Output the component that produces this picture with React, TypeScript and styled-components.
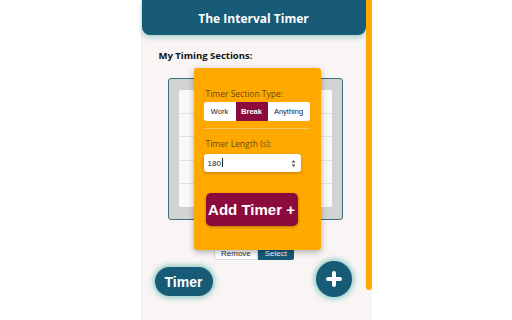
import React from "react";
import styled, { createGlobalStyle } from "styled-components";

const Global = createGlobalStyle`
  html, body { margin: 0; padding: 0; background: #ffffff; }
  body { width: 512px; height: 320px; overflow: hidden; font-family: "Open Sans", "Noto Sans", sans-serif; }
  * { box-sizing: border-box; }
`;

const Page = styled.div`
  display: flex;
  justify-content: center;
  width: 512px;
  height: 320px;
`;

const Panel = styled.div`
  position: relative;
  display: flex;
  width: 231px;
  height: 320px;
  background: #f8f5f4;
  border-left: 1px solid #ececec;
`;

const Content = styled.div`
  width: 224px;
  display: flex;
  flex-direction: column;
`;

const Scrollbar = styled.div`
  width: 6px;
  height: 290px;
  background: #ffa800;
  border-radius: 0 0 3px 3px;
`;

const Header = styled.header`
  height: 35px;
  padding-top: 1px;
  background: #175b76;
  border-radius: 0 0 8px 8px;
  box-shadow: 0 3px 5px rgba(40, 150, 140, 0.35);
  display: flex;
  align-items: center;
  justify-content: center;
  color: #fff;
  font-weight: 700;
  font-size: 12px;
`;

const SectionTitle = styled.div`
  margin: 14px 0 0 17px;
  font-size: 9.5px;
  font-weight: 700;
  color: #111;
`;

const ListBox = styled.div`
  margin: 16px 0 0 26px;
  width: 175px;
  height: 142px;
  background: #d3d3d3;
  border: 1px solid #3e6d7e;
  border-radius: 3px;
  padding: 11px 10px 12px 10px;
`;

const List = styled.div`
  background: #f9f9f9;
  height: 100%;
  border-radius: 2px;
  display: flex;
  flex-direction: column;
`;

const ListRow = styled.div`
  flex: 1;
  border-bottom: 1px solid #e3e3e3;
  &:last-child { border-bottom: none; }
`;

const ActionRow = styled.div`
  margin-top: 28px;
  display: flex;
  justify-content: center;
  padding-left: 1px;
`;

const SmallBtn = styled.button<{ $dark?: boolean }>`
  height: 12px;
  padding: 0 6px;
  font-family: "Liberation Sans", Arial, sans-serif;
  font-size: 8px;
  border: 1px solid ${(p) => (p.$dark ? "#175b76" : "#d8d8d8")};
  background: ${(p) => (p.$dark ? "#175b76" : "#fff")};
  color: ${(p) => (p.$dark ? "#fff" : "#333")};
  border-radius: 0 0 ${(p) => (p.$dark ? "2px 0" : "0 2px")};
  line-height: 10px;
`;

const BottomRow = styled.div`
  margin-top: 1px;
  display: flex;
  align-items: center;
  justify-content: space-between;
  padding: 0 14px 0 13px;
`;

const TimerBtn = styled.button`
  margin-top: 5px;
  width: 58px;
  height: 29px;
  border: none;
  border-radius: 15px;
  background: #175b76;
  color: #fff;
  font-family: "Liberation Sans", Arial, sans-serif;
  font-weight: 700;
  font-size: 14px;
  box-shadow: 0 0 5px 2px rgba(60, 170, 160, 0.55);
`;

const PlusBtn = styled.button`
  width: 36px;
  height: 36px;
  border: none;
  border-radius: 50%;
  background: #175b76;
  display: flex;
  align-items: center;
  justify-content: center;
  box-shadow: 0 0 5px 2px rgba(60, 170, 160, 0.55);
`;

const Popup = styled.div`
  position: absolute;
  left: 52px;
  top: 68px;
  width: 127px;
  height: 182px;
  background: #ffa800;
  border-radius: 3px;
  box-shadow: 0 2px 6px rgba(0, 0, 0, 0.3);
  padding: 20px 10px 0 10px;
  display: flex;
  flex-direction: column;
`;

const Label = styled.div`
  font-size: 8.5px;
  color: #6a4a14;
  margin-left: 2px;
`;

const Segments = styled.div`
  margin-top: 3px;
  display: flex;
  height: 19px;
  width: 106px;
  background: #fff;
  border-radius: 3px;
  overflow: hidden;
`;

const Segment = styled.div<{ $active?: boolean; $w: number }>`
  width: ${(p) => p.$w}px;
  display: flex;
  align-items: center;
  justify-content: center;
  font-family: "Liberation Sans", Arial, sans-serif;
  font-size: 7.5px;
  font-weight: ${(p) => (p.$active ? 700 : 400)};
  background: ${(p) => (p.$active ? "#8c0b3d" : "#fff")};
  color: ${(p) => (p.$active ? "#fff" : "#222")};
`;

const Divider = styled.div`
  margin-top: 7px;
  width: 106px;
  height: 1px;
  background: #f2c46a;
`;

const LengthLabel = styled(Label)`
  margin-top: 9px;
`;

const InputBox = styled.div`
  margin-top: 5px;
  width: 97px;
  height: 18px;
  background: #fff;
  border-radius: 3px;
  box-shadow: 0 1px 3px rgba(0, 0, 0, 0.25);
  display: flex;
  align-items: center;
  justify-content: space-between;
  padding: 0 5px 0 4px;
  font-family: "Liberation Sans", Arial, sans-serif;
  font-size: 8px;
  color: #222;
`;

const Caret = styled.span`
  display: inline-block;
  width: 1px;
  height: 9px;
  background: #222;
  vertical-align: -1px;
  margin-left: 1px;
`;

const AddBtn = styled.button`
  margin-top: 21px;
  margin-left: 2px;
  width: 92px;
  height: 33px;
  padding: 0;
  white-space: nowrap;
  border: none;
  border-radius: 5px;
  background: #8c0b3d;
  color: #fff;
  font-family: "Liberation Sans", Arial, sans-serif;
  font-weight: 700;
  font-size: 15px;
  box-shadow: 0 1px 3px rgba(0, 0, 0, 0.3);
`;

export default function App() {
  return (
    <>
      <Global />
      <Page>
        <Panel>
          <Content>
            <Header>The Interval Timer</Header>
            <SectionTitle>My Timing Sections:</SectionTitle>
            <ListBox>
              <List>
                <ListRow />
                <ListRow />
                <ListRow />
                <ListRow />
                <ListRow />
              </List>
            </ListBox>
            <ActionRow>
              <SmallBtn>Remove</SmallBtn>
              <SmallBtn $dark>Select</SmallBtn>
            </ActionRow>
            <BottomRow>
              <TimerBtn>Timer</TimerBtn>
              <PlusBtn>
                <svg width="16" height="16" viewBox="0 0 16 16">
                  <path d="M8 2v12M2 8h12" stroke="#fff" strokeWidth="4" strokeLinecap="round" />
                </svg>
              </PlusBtn>
            </BottomRow>
          </Content>
          <Scrollbar />
          <Popup>
            <Label>Timer Section Type:</Label>
            <Segments>
              <Segment $w={32}>Work</Segment>
              <Segment $w={32} $active>Break</Segment>
              <Segment $w={42}>Anything</Segment>
            </Segments>
            <Divider />
            <LengthLabel>Timer Length (s):</LengthLabel>
            <InputBox>
              <span>180<Caret /></span>
              <svg width="5" height="9" viewBox="0 0 5 9">
                <path d="M0.5 3.5L2.5 1L4.5 3.5Z M0.5 5.5L2.5 8L4.5 5.5Z" fill="#555" />
              </svg>
            </InputBox>
            <AddBtn>Add Timer +</AddBtn>
          </Popup>
        </Panel>
      </Page>
    </>
  );
}
